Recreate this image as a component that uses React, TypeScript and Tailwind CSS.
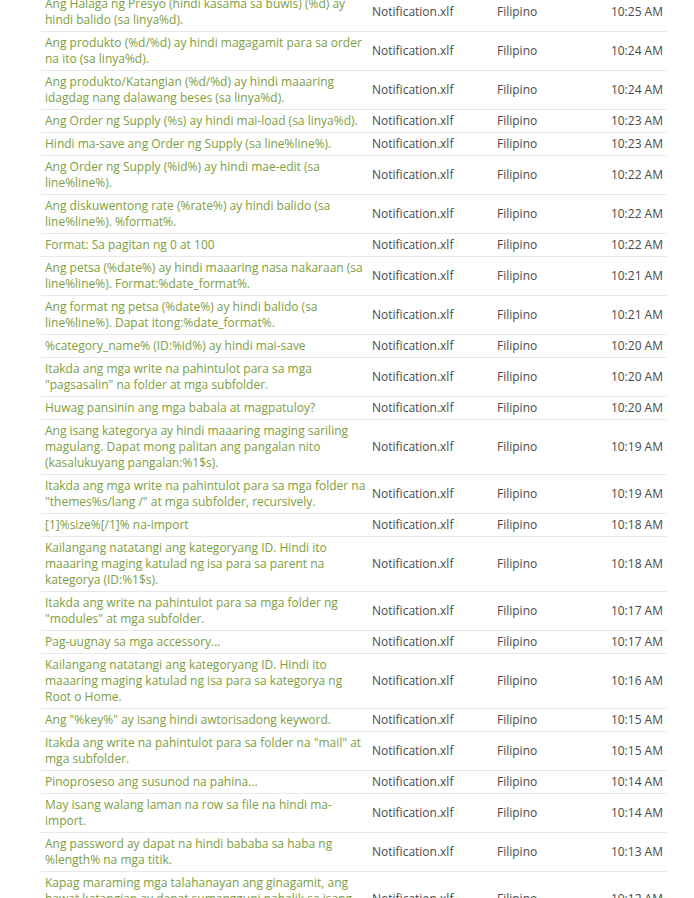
type Row = {
  message: string;
  time: string;
};

const rows: Row[] = [
  { message: 'Ang Halaga ng Presyo (hindi kasama sa buwis) (%d) ay hindi balido (sa linya%d).', time: '10:25 AM' },
  { message: 'Ang produkto (%d/%d) ay hindi magagamit para sa order na ito (sa linya%d).', time: '10:24 AM' },
  { message: 'Ang produkto/Katangian (%d/%d) ay hindi maaaring idagdag nang dalawang beses (sa linya%d).', time: '10:24 AM' },
  { message: 'Ang Order ng Supply (%s) ay hindi mai-load (sa linya%d).', time: '10:23 AM' },
  { message: 'Hindi ma-save ang Order ng Supply (sa line%line%).', time: '10:23 AM' },
  { message: 'Ang Order ng Supply (%id%) ay hindi mae-edit (sa line%line%).', time: '10:22 AM' },
  { message: 'Ang diskuwentong rate (%rate%) ay hindi balido (sa line%line%). %format%.', time: '10:22 AM' },
  { message: 'Format: Sa pagitan ng 0 at 100', time: '10:22 AM' },
  { message: 'Ang petsa (%date%) ay hindi maaaring nasa nakaraan (sa line%line%). Format:%date_format%.', time: '10:21 AM' },
  { message: 'Ang format ng petsa (%date%) ay hindi balido (sa line%line%). Dapat itong:%date_format%.', time: '10:21 AM' },
  { message: '%category_name% (ID:%id%) ay hindi mai-save', time: '10:20 AM' },
  { message: 'Itakda ang mga write na pahintulot para sa mga "pagsasalin" na folder at mga subfolder.', time: '10:20 AM' },
  { message: 'Huwag pansinin ang mga babala at magpatuloy?', time: '10:20 AM' },
  { message: 'Ang isang kategorya ay hindi maaaring maging sariling magulang. Dapat mong palitan ang pangalan nito (kasalukuyang pangalan:%1$s).', time: '10:19 AM' },
  { message: 'Itakda ang mga write na pahintulot para sa mga folder na "themes%s/lang /" at mga subfolder, recursively.', time: '10:19 AM' },
  { message: '[1]%size%[/1]% na-import', time: '10:18 AM' },
  { message: 'Kailangang natatangi ang kategoryang ID. Hindi ito maaaring maging katulad ng isa para sa parent na kategorya (ID:%1$s).', time: '10:18 AM' },
  { message: 'Itakda ang write na pahintulot para sa mga folder ng "modules" at mga subfolder.', time: '10:17 AM' },
  { message: 'Pag-uugnay sa mga accessory...', time: '10:17 AM' },
  { message: 'Kailangang natatangi ang kategoryang ID. Hindi ito maaaring maging katulad ng isa para sa kategorya ng Root o Home.', time: '10:16 AM' },
  { message: 'Ang "%key%" ay isang hindi awtorisadong keyword.', time: '10:15 AM' },
  { message: 'Itakda ang write na pahintulot para sa folder na "mail" at mga subfolder.', time: '10:15 AM' },
  { message: 'Pinoproseso ang susunod na pahina...', time: '10:14 AM' },
  { message: 'May isang walang laman na row sa file na hindi ma-import.', time: '10:14 AM' },
  { message: 'Ang password ay dapat na hindi bababa sa haba ng %length% na mga titik.', time: '10:13 AM' },
  { message: 'Kapag maraming mga talahanayan ang ginagamit, ang bawat katangian ay dapat sumangguni pabalik sa isang kategorya.', time: '10:12 AM' },
];

const App = () => {
  return (
    <div className="w-[694px] h-[898px] overflow-hidden bg-white font-['Open_Sans',sans-serif] text-[12px] leading-4">
      {/* list is scrolled a few pixels down */}
      <div className="-mt-[7px] pl-[41px]">
        <table className="w-[626px] table-fixed border-collapse">
          <colgroup>
            <col className="w-[327px]" />
            <col className="w-[125px]" />
            <col className="w-[100px]" />
            <col />
          </colgroup>
          <tbody>
            {rows.map((row, i) => (
              <tr key={i} className="border-b border-[#e8e8e8]">
                <td className="pl-1 pr-0 py-[3px] align-middle text-[#7d9e3e]">{row.message}</td>
                <td className="px-1 py-[3px] align-middle text-[#4a4a4a]">Notification.xlf</td>
                <td className="px-1 py-[3px] align-middle text-[#4a4a4a]">Filipino</td>
                <td className="px-1 py-[3px] align-middle text-right text-[#4a4a4a] whitespace-nowrap">{row.time}</td>
              </tr>
            ))}
          </tbody>
        </table>
      </div>
    </div>
  );
};

export default App;
